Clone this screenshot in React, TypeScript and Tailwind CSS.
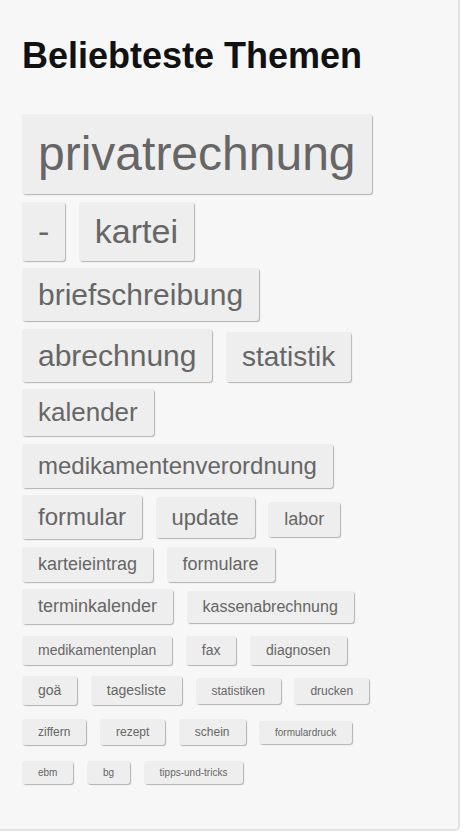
import React from 'react';

/**
 * A single tag in the cloud, sized by popularity
 */
interface Tag {
  label: string;
  size: number;
}

const tags: Tag[] = [
  { label: 'privatrechnung', size: 48 },
  { label: '-', size: 34 },
  { label: 'kartei', size: 34 },
  { label: 'briefschreibung', size: 30 },
  { label: 'abrechnung', size: 30 },
  { label: 'statistik', size: 28 },
  { label: 'kalender', size: 26 },
  { label: 'medikamentenverordnung', size: 24 },
  { label: 'formular', size: 24 },
  { label: 'update', size: 22 },
  { label: 'labor', size: 18 },
  { label: 'karteieintrag', size: 18 },
  { label: 'formulare', size: 18 },
  { label: 'terminkalender', size: 18 },
  { label: 'kassenabrechnung', size: 16 },
  { label: 'medikamentenplan', size: 14 },
  { label: 'fax', size: 14 },
  { label: 'diagnosen', size: 14 },
  { label: 'goä', size: 14 },
  { label: 'tagesliste', size: 14 },
  { label: 'statistiken', size: 12 },
  { label: 'drucken', size: 12 },
  { label: 'ziffern', size: 12 },
  { label: 'rezept', size: 12 },
  { label: 'schein', size: 12 },
  { label: 'formulardruck', size: 10 },
  { label: 'ebm', size: 10 },
  { label: 'bg', size: 10 },
  { label: 'tipps-und-tricks', size: 10 },
];

export default function App() {
  return (
    <div className="w-[460px] h-[831px] bg-[#f7f7f7] border-r-2 border-b-2 border-[#e2e2e2] rounded-br-[5px] pt-[36px] px-[22px] font-['Liberation_Sans',Arial,sans-serif]">
      <h2 className="text-[36px] leading-[40px] font-bold text-[#111]">Beliebteste Themen</h2>

      {/* tag cloud: inline-blocks on a 40px strut, like the original widget */}
      <div className="mt-[38px] pr-[36px] text-[10px] leading-[40px]">
        {tags.map((tag) => (
          <a
            key={tag.label}
            href="#"
            className="inline-block mr-[13.5px] mb-[7.5px] px-4 py-1 leading-[1.5] rounded-[3px] bg-[#eeeeee] text-[#666666] shadow-[1px_1px_1px_rgba(0,0,0,0.28)]"
            style={{ fontSize: tag.size }}
          >
            {tag.label}
          </a>
        ))}
      </div>
    </div>
  );
}
